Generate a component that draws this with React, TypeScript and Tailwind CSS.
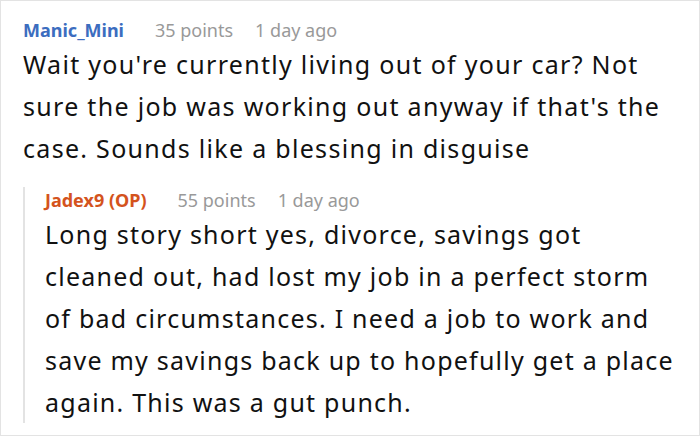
export default function App() {
  return (
    <div
      className="w-[700px] h-[436px] bg-white border border-[#e3e3e3] overflow-hidden"
      style={{ fontFamily: '"Noto Sans", sans-serif' }}
    >
      <div className="pl-[22px] pt-[16px]">
        <div className="flex items-baseline text-[18px] leading-[26px]">
          <span className="font-bold text-[#3c6dbf]">Manic_Mini</span>
          <span className="ml-[31px] text-[#999999]">35 points</span>
          <span className="ml-[22px] text-[#999999]">1 day ago</span>
        </div>
        <p className="text-[25px] leading-[42px] tracking-[1.3px] text-[#111111] pr-[20px]">
          Wait you're currently living out of your car? Not sure the job was working out anyway if that's the case. Sounds like a blessing in disguise
        </p>
      </div>
      <div className="ml-[22px] mt-[18px] border-l-2 border-[#e3e3e3] pl-[20px]">
        <div className="flex items-baseline text-[18px] leading-[26px]">
          <span className="font-bold text-[#d4531d]">Jadex9 (OP)</span>
          <span className="ml-[31px] text-[#999999]">55 points</span>
          <span className="ml-[22px] text-[#999999]">1 day ago</span>
        </div>
        <p className="text-[25px] leading-[42px] tracking-[1.24px] text-[#111111] pr-[20px]">
          Long story short yes, divorce, savings got cleaned out, had lost my job in a perfect storm of bad circumstances. I need a job to work and save my savings back up to hopefully get a place again. This was a gut punch.
        </p>
      </div>
    </div>
  );
}
